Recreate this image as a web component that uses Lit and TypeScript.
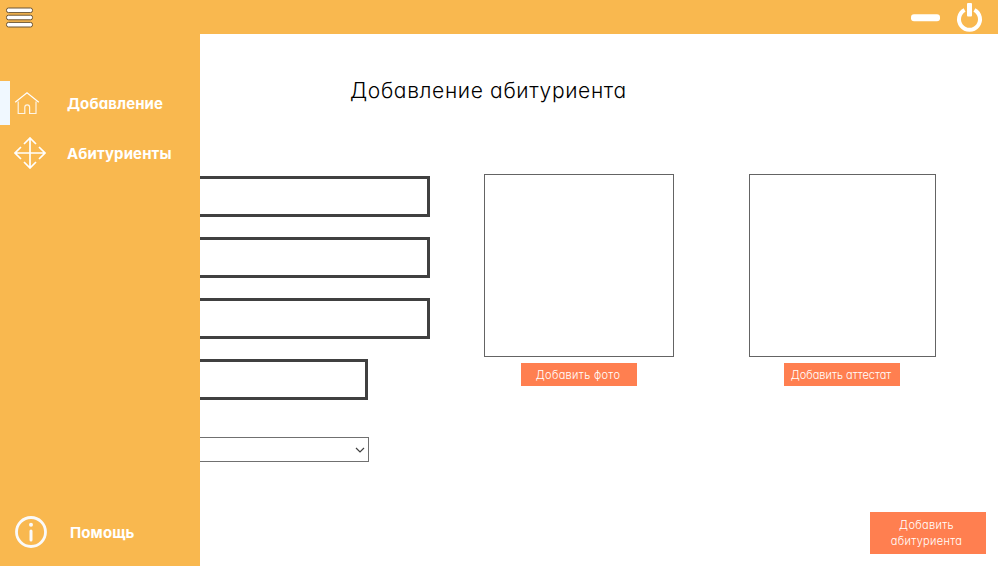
import { LitElement, html, css, svg } from "lit";
import { customElement } from "lit/decorators.js";

const homeIcon = svg`<svg width="32" height="32" viewBox="0 0 32 32" fill="none" stroke="#fff" stroke-width="1.2">
  <path d="M1.2 15.2 13 5.8l11.8 9.4"/><path d="M4.2 14.5v12h6.6v-6.3a2.4 2.4 0 0 1 4.8 0v6.3h6.4v-12" stroke-opacity=".85"/></svg>`;

const moveIcon = svg`<svg width="32" height="32" viewBox="0 0 32 32" fill="none" stroke="#fff" stroke-width="1.7">
  <path d="M16 1v30M1 16h30M10 7l6-6 6 6M10 25l6 6 6-6M7 10l-6 6 6 6M25 10l6 6-6 6"/></svg>`;

const infoIcon = svg`<svg width="32" height="32" viewBox="0 0 32 32" fill="none" stroke="#fafafa">
  <circle cx="16" cy="16" r="14.5" stroke-width="2.8"/><circle cx="16" cy="8.8" r="2" fill="#fafafa" stroke="none"/>
  <path d="M16 15v9" stroke-width="3" stroke-linecap="round"/></svg>`;

@customElement("app-root")
export class AppRoot extends LitElement {
  static styles = css`
    :host {
      display: flex;
      flex-direction: column;
      width: 998px;
      height: 566px;
      overflow: hidden;
      background: #fff;
      font-family: Inter, "Open Sans", sans-serif;
      font-feature-settings: "cv11";
    }
    * { box-sizing: border-box; }
    svg { display: block; flex: none; }
    .bar {
      display: flex;
      justify-content: space-between;
      height: 34px;
      flex: none;
      background: #f9b84f;
    }
    .window { display: flex; }
    .body { display: flex; flex: 1; min-height: 0; }
    .side {
      display: flex;
      flex-direction: column;
      width: 200px;
      flex: none;
      padding: 47px 0 12px;
      background: #f9b84f;
      color: #fff;
      font-size: 15px;
      font-weight: 700;
    }
    .item {
      display: flex;
      align-items: center;
      height: 44px;
      margin-bottom: 6px;
      border-left: 10px solid transparent;
      padding-left: 4px;
      white-space: nowrap;
      letter-spacing: 0.1px;
    }
    .item svg { margin-right: 21px; }
    .active { border-color: #f0f8ff; }
    .help { margin: auto 0 0; padding-left: 5px; }
    .help svg { margin-right: 23px; }
    .main { flex: 1; display: flex; flex-direction: column; }
    .title {
      margin: 43px 0 0 150px;
      height: 28px;
      font-size: 21px;
      line-height: 28px;
      font-weight: 300;
      letter-spacing: 0.65px;
      color: #000;
      white-space: nowrap;
    }
    .content { display: flex; margin-top: 69px; }
    .form { width: 284px; padding-top: 2px; }
    .field {
      width: 230px;
      height: 41px;
      margin-bottom: 20px;
      border: 3px solid #404040;
      border-left: 0;
    }
    .short { width: 168px; margin-bottom: 37px; }
    .select {
      display: flex;
      align-items: center;
      justify-content: flex-end;
      width: 169px;
      height: 25px;
      padding-right: 3px;
      border: 1px solid #707070;
      border-left: 0;
    }
    .upload { display: flex; flex-direction: column; align-items: center; width: 190px; }
    .diploma { width: 187px; margin-left: 75px; }
    .preview { width: 100%; height: 183px; margin-bottom: 6px; border: 1px solid #646464; }
    .btn {
      width: 116px;
      height: 23px;
      padding: 0;
      border: 0;
      background: #ff7f50;
      color: #fff;
      font: 300 11px/16px Inter, "Open Sans", sans-serif;
      font-feature-settings: "cv11";
      letter-spacing: 0.33px;
      text-align: center;
      white-space: nowrap;
    }
    .photo .btn { padding-right: 2px; }
    .diploma .btn { margin-right: 1px; padding-right: 2px; letter-spacing: 0; }
    .submit { align-self: flex-end; height: 42px; margin: auto 12px 12px 0; padding-right: 3px; }
  `;

  render() {
    return html`
      <header class="bar">
        <svg width="40" height="34" fill="#fff" stroke="#6b5536" stroke-width="1">
          <rect x="6.5" y="8" width="26" height="4.6" rx="2"/>
          <rect x="6.5" y="15.2" width="26" height="4.6" rx="2"/>
          <rect x="6.5" y="22.4" width="26" height="4.6" rx="2"/>
        </svg>
        <div class="window">
          <svg width="98" height="34" fill="none" stroke="#fff">
            <rect x="11" y="14.2" width="29" height="7" rx="3" fill="#fff" stroke="none"/>
            <path d="M64.6 10a10.5 10.5 0 1 0 9.8 0" stroke-width="4"/>
            <rect x="67" y="3" width="5" height="13.5" rx="1" fill="#fff" stroke="none"/>
          </svg>
        </div>
      </header>
      <div class="body">
        <nav class="side">
          <div class="item active">${homeIcon}<span>Добавление</span></div>
          <div class="item">${moveIcon}<span>Абитуриенты</span></div>
          <div class="item help">${infoIcon}<span>Помощь</span></div>
        </nav>
        <main class="main">
          <div class="title">Добавление абитуриента</div>
          <section class="content">
            <div class="form">
              <div class="field"></div>
              <div class="field"></div>
              <div class="field"></div>
              <div class="field short"></div>
              <div class="select">
                <svg width="10" height="8" fill="none" stroke="#404040" stroke-width="1.2"><path d="M1 2l4 4 4-4"/></svg>
              </div>
            </div>
            <div class="upload photo">
              <div class="preview"></div>
              <button class="btn">Добавить фото</button>
            </div>
            <div class="upload diploma">
              <div class="preview"></div>
              <button class="btn">Добавить аттестат</button>
            </div>
          </section>
          <button class="btn submit">Добавить<br>абитуриента</button>
        </main>
      </div>
    `;
  }
}
